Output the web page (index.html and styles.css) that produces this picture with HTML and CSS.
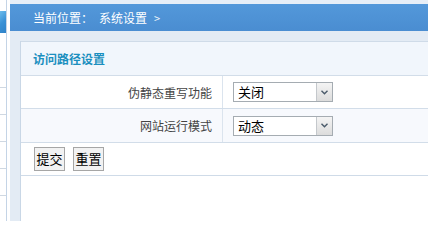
FILE: index.html
```html
<!DOCTYPE html>
<html lang="zh-CN">
<head>
<meta charset="utf-8">
<title>系统设置</title>
<link rel="stylesheet" href="styles.css">
</head>
<body>
<div class="page">
  <aside class="sidebar">
    <div class="side-active"></div>
    <div class="side-item tall"></div>
    <div class="side-item"></div>
    <div class="side-item"></div>
    <div class="side-item"></div>
    <div class="side-item"></div>
  </aside>
  <div class="main">
    <div class="topband"></div>
    <div class="crumb">当前位置：<span class="crumb-cur">系统设置</span><span class="crumb-arrow">&gt;</span></div>
    <div class="gapband"></div>
    <div class="content">
      <div class="stripe"></div>
      <div class="workarea">
        <div class="panel">
          <div class="panel-title">访问路径设置</div>
          <div class="form-row row-a">
            <div class="label">伪静态重写功能</div>
            <div class="field">
              <span class="select-wrap">
                <select class="select"><option>关闭</option><option>开启</option></select>
                <span class="arrow"><svg width="7" height="5" viewBox="0 0 7 5"><path d="M0.5 0.8 L3.5 3.8 L6.5 0.8" fill="none" stroke="#4a5a6a" stroke-width="1.4"/></svg></span>
              </span>
            </div>
          </div>
          <div class="form-row row-b">
            <div class="label">网站运行模式</div>
            <div class="field">
              <span class="select-wrap">
                <select class="select"><option>动态</option><option>静态</option></select>
                <span class="arrow"><svg width="7" height="5" viewBox="0 0 7 5"><path d="M0.5 0.8 L3.5 3.8 L6.5 0.8" fill="none" stroke="#4a5a6a" stroke-width="1.4"/></svg></span>
              </span>
            </div>
          </div>
          <div class="actions">
            <button class="btn" type="submit">提交</button>
            <button class="btn" type="reset">重置</button>
          </div>
        </div>
      </div>
    </div>
  </div>
</div>
</body>
</html>
```
FILE: styles.css
```css
html, body {
  margin: 0;
  padding: 0;
  background: #ffffff;
  font-family: "Noto Sans CJK SC", "Liberation Sans", sans-serif;
  font-size: 12px;
  color: #333;
}

.page {
  display: flex;
  height: 221px;
  overflow: hidden;
}

.sidebar {
  width: 6px;
  border-right: 1px solid #c4d4e6;
  padding-top: 11px;
  flex-shrink: 0;
  background: #fff;
}

.side-active {
  height: 22px;
  background: linear-gradient(135deg, #6cbcec 0%, #3a92d6 50%, #2f82c8 100%);
}

.side-item {
  height: 26px;
  border-bottom: 1px solid #cfd8e2;
}

.side-item.tall {
  height: 54px;
}

.main {
  flex: 1;
  margin-left: 3px;
  display: flex;
  flex-direction: column;
}

.topband {
  height: 4px;
  background: #e6eef7;
}

.crumb {
  height: 27px;
  line-height: 27px;
  padding-left: 23px;
  background: linear-gradient(#5398da, #4a8dd1);
  color: #ffffff;
  font-size: 12px;
  white-space: nowrap;
}

.crumb-cur {
  margin-left: 6px;
}

.crumb-arrow {
  margin-left: 7px;
  font-size: 11px;
  opacity: 0.9;
}

.gapband {
  height: 10px;
  background: #e3ebf4;
}

.content {
  flex: 1;
  display: flex;
}

.stripe {
  width: 10px;
  background: #e3ebf4;
  border-right: 1px solid #c9d7e6;
  flex-shrink: 0;
}

.workarea {
  flex: 1;
  background: #fff;
}

.panel {
  border-top: 1px solid #cfdbe8;
  border-bottom: 1px solid #cfdbe8;
}

.panel-title {
  height: 33px;
  line-height: 33px;
  padding-left: 12px;
  background: #f1f6fc;
  border-bottom: 1px solid #d2dde9;
  color: #1b8fbf;
  font-weight: bold;
  font-size: 12px;
}

.form-row {
  display: flex;
  border-bottom: 1px solid #d2dde9;
}

.row-a {
  height: 32px;
  background: #ffffff;
}

.row-b {
  height: 33px;
  background: #f7f9fd;
}

.label {
  width: 191px;
  padding-right: 10px;
  border-right: 1px solid #dbe4ee;
  text-align: right;
  display: flex;
  align-items: center;
  justify-content: flex-end;
  color: #444;
}

.field {
  display: flex;
  align-items: center;
  padding-left: 10px;
}

.select-wrap {
  position: relative;
  display: inline-block;
  width: 100px;
  height: 20px;
}

.select {
  -webkit-appearance: none;
  appearance: none;
  box-sizing: border-box;
  width: 100px;
  height: 20px;
  margin: 0;
  padding: 0 0 0 4px;
  border: 1px solid #a5acb2;
  border-radius: 0;
  background: #fff;
  font-family: "Noto Sans CJK SC", "Liberation Sans", sans-serif;
  font-size: 13px;
  line-height: 18px;
  color: #000;
  outline: none;
}

.arrow {
  position: absolute;
  right: 1px;
  top: 1px;
  width: 16px;
  height: 18px;
  box-sizing: border-box;
  border-left: 1px solid #c4c8cc;
  background: linear-gradient(#f4f4f4, #dcdcdc);
  display: flex;
  align-items: center;
  justify-content: center;
  pointer-events: none;
}

.actions {
  height: 32px;
  display: flex;
  align-items: center;
  gap: 8px;
  padding-left: 13px;
}

.btn {
  width: 31px;
  height: 24px;
  padding: 0;
  margin: 0;
  border: 1px solid #a6a6a6;
  border-radius: 0;
  background: #f2f2f2;
  font-family: "Noto Sans CJK SC", "Liberation Sans", sans-serif;
  font-size: 13px;
  color: #000;
  line-height: 22px;
}
```
